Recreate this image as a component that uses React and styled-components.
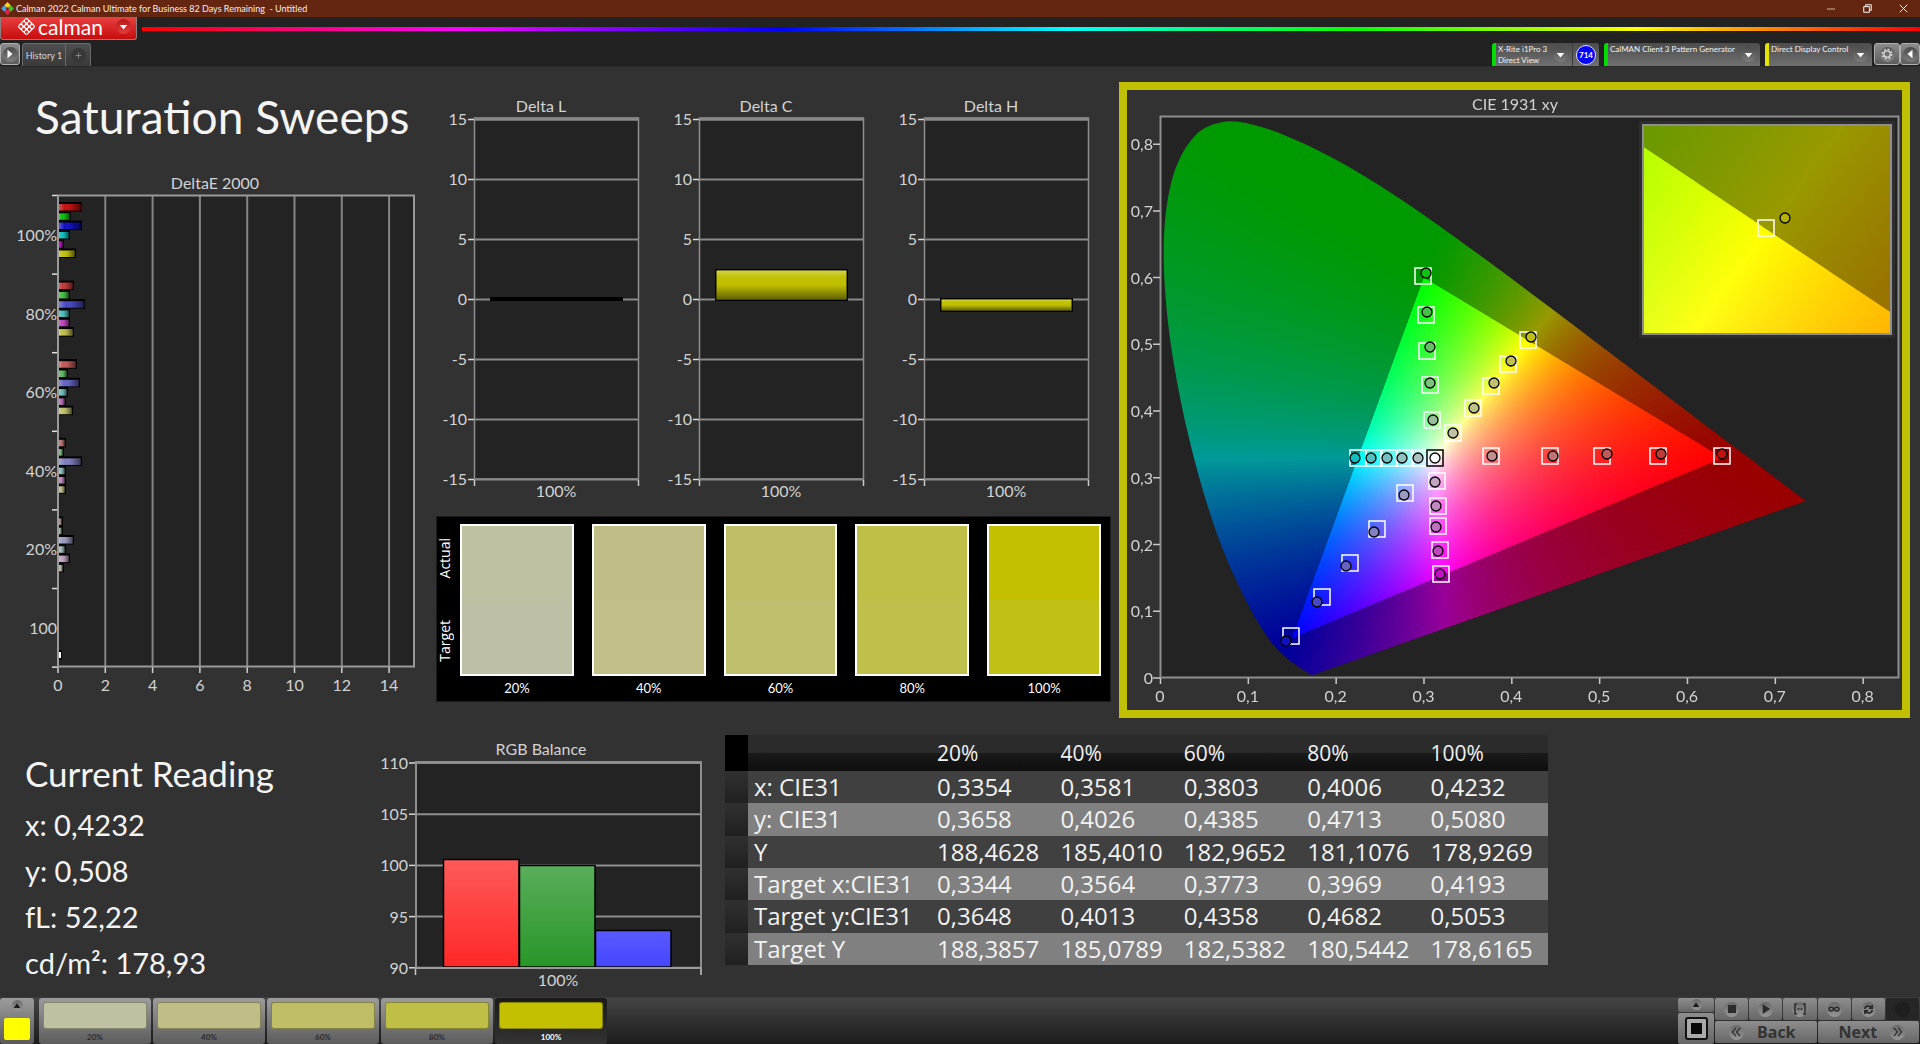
import React, { useEffect, useRef } from "react";
import styled, { createGlobalStyle } from "styled-components";

const UI = `Lato, "Open Sans", sans-serif`;
const SYS = `"Open Sans", "Noto Sans", sans-serif`;

const GlobalStyle = createGlobalStyle`
  * { box-sizing: border-box; }
  body { margin: 0; background: #323232; color: #f0f0f0; font-family: ${UI}; }
  button { font: inherit; color: inherit; border: 0; padding: 0; margin: 0; cursor: pointer; }
`;

/* ---------- shell ---------- */

const Shell = styled.div`
  min-height: 100vh;
  display: flex;
  flex-direction: column;
  background: #323232;
`;

const TitleBar = styled.header`
  height: 17px;
  display: flex;
  align-items: center;
  gap: 2px;
  padding-left: 1px;
  background: #642610;
  color: #f6eeea;
  font: 9px/17px ${UI};
`;

const TitleText = styled.span`
  flex: 1;
  white-space: pre;
`;

const WindowButton = styled.button`
  width: 34px;
  height: 17px;
  display: grid;
  place-items: center;
  background: none;
`;

const Brand = styled.div`
  display: flex;
  align-items: center;
  gap: 5px;
  height: 23px;
  background: #222;
`;

const BrandButton = styled.button`
  width: 137px;
  height: 23px;
  display: flex;
  align-items: center;
  padding: 0 5px 3px 16px;
  border: 1px solid #8b8080;
  border-top: 0;
  border-radius: 0 0 3px 3px;
  background: linear-gradient(#e84040, #c80c0c);
  color: #fff;
`;

const BrandName = styled.span`
  flex: 1;
  padding-left: 2px;
  text-align: left;
  font: 21px/18px ${UI};
`;

const Round = styled.span`
  width: ${(p) => p.$size || 15}px;
  height: ${(p) => p.$size || 15}px;
  flex: none;
  display: grid;
  place-items: center;
  border-radius: 50%;
  background: ${(p) => p.$bg || "linear-gradient(#4c4c4c, #7c7c7c)"};
`;

const Rainbow = styled.div`
  flex: 1;
  height: 4px;
  background: linear-gradient(90deg, #f00, #f0f 18%, #00f 36%, #0ff 52%, #0f0 68%, #ff0 84%, #f00);
`;

const TabRow = styled.nav`
  display: flex;
  align-items: flex-start;
  height: 26px;
  padding-top: 3px;
  background: #222;
`;

const EdgeButton = styled.button`
  width: ${(p) => p.$w}px;
  height: 22px;
  display: grid;
  place-items: center;
  border: 1px solid #b0b0b0;
  border-radius: 3px;
  background: linear-gradient(#8c8c8c, #5c5c5c);
`;

const Tab = styled.button`
  height: 23px;
  width: ${(p) => p.$w}px;
  display: grid;
  place-items: center;
  border: 1px solid #6a6a6a;
  border-bottom: 0;
  border-left-width: ${(p) => (p.$first ? 1 : 0)}px;
  border-radius: ${(p) => (p.$first ? "3px 0 0 0" : "0 3px 0 0")};
  background: linear-gradient(#4e4e4e, #3a3a3a);
  color: #d8d8d8;
  font-size: 9px;
`;

const Tabs = styled.div`
  display: flex;
  flex: 1;
  padding-left: 2px;
`;

const Devices = styled.div`
  display: flex;
  gap: 5px;
  padding-right: 2px;
`;

const Device = styled.div`
  display: flex;
  width: ${(p) => p.$w}px;
  height: 23px;
  border-left: 4px solid ${(p) => p.$color};
  border-radius: 3px 3px 0 0;
  background: linear-gradient(#4c4c4c, #707070);
`;

const DeviceButton = styled.button`
  flex: 1;
  display: flex;
  align-items: flex-start;
  padding: 1px 4px 0 2px;
  background: none;
  color: #f2f2f2;
  text-align: left;
  font-size: 8px;
  line-height: 11px;
  white-space: nowrap;
`;

const DeviceName = styled.span`
  flex: 1;
`;

const DeviceArrow = styled(Round)`
  margin-top: 3px;
`;

const Meter = styled.span`
  width: 27px;
  display: grid;
  place-items: center;
  border-left: 1px solid #3c3c3c;
`;

const MeterCount = styled.span`
  width: 20px;
  height: 20px;
  border: 1px solid #e0e0ff;
  border-radius: 50%;
  background: #00f;
  color: #fff;
  text-align: center;
  font: bold 8px/18px ${UI};
`;

/* ---------- workspace ---------- */

const Workspace = styled.main`
  flex: 1;
  border-top: 1px solid #2a2a2a;
`;

const TopGrid = styled.div`
  display: grid;
  grid-template-columns: minmax(0, 436fr) minmax(0, 683fr) minmax(0, 791fr);
  padding-right: 10px;
`;

const Column = styled.section`
  padding: ${(p) => p.$pad};
`;

const PageTitle = styled.h1`
  margin: 0 0 18px;
  padding: 20px 0 0 35px;
  font: 46px/60px ${UI};
  color: #f4f4f4;
  white-space: nowrap;
`;

const Chart = styled.svg`
  display: block;
  width: 100%;
  overflow: visible;
  font: 16px ${UI};
  fill: #d2d2d2;
`;

const DeltaRow = styled.div`
  display: grid;
  grid-template-columns: repeat(3, 1fr);
  margin-bottom: 6px;
`;

const SwatchPanel = styled.div`
  display: flex;
  gap: 4px;
  height: 186px;
  padding: 7px 9px 8px 0;
  border: 1px solid #1c1c1c;
  background: #000;
  color: #fff;
`;

const SideLabels = styled.div`
  width: 19px;
  height: 152px;
  padding: 14px 0;
  display: flex;
  flex-direction: column;
  justify-content: space-between;
`;

const SideLabel = styled.span`
  padding-left: 1px;
  writing-mode: vertical-rl;
  transform: rotate(180deg);
  font: 14px/16px ${SYS};
`;

const SwatchList = styled.div`
  flex: 1;
  display: grid;
  grid-template-columns: repeat(5, 1fr);
  gap: 18px;
`;

const Swatch = styled.figure`
  margin: 0;
  text-align: center;
`;

const SwatchColor = styled.div`
  height: 152px;
  border: 2px solid #fff;
  background: linear-gradient(${(p) => p.$actual} 50%, ${(p) => p.$target} 50%);
`;

const SwatchLabel = styled.figcaption`
  font-size: 13px;
  line-height: 24px;
`;

const CiePanel = styled.section`
  margin-top: 15px;
  display: grid;
  border: 8px solid #c0c000;
`;

const CieCanvas = styled.canvas`
  grid-area: 1 / 1;
  width: 100%;
  display: block;
`;

const CieOverlay = styled(Chart)`
  grid-area: 1 / 1;
`;

const BottomGrid = styled.div`
  display: grid;
  grid-template-columns: minmax(0, 370fr) minmax(0, 355fr) minmax(0, 823fr) minmax(0, 372fr);
  align-items: start;
  padding-top: 17px;
`;

const Reading = styled.section`
  padding: 12px 0 0 25px;
`;

const ReadingTitle = styled.h2`
  margin: 0 0 3px;
  font: 35px/52px ${UI};
  color: #f4f4f4;
`;

const ReadingLine = styled.p`
  margin: 0;
  font: 29px/46px ${UI};
  color: #f4f4f4;
`;

const DataTable = styled.table`
  width: 100%;
  height: 230px;
  table-layout: fixed;
  border-collapse: collapse;
  font: 24px/32px ${SYS};
  color: #f2f2f2;
`;

const StubCol = styled.col` width: 23px; `;
const NameCol = styled.col` width: 183px; `;

const HeadCell = styled.th`
  height: 36px;
  padding: 0 0 0 6px;
  text-align: left;
  font-weight: 400;
  font-size: 21px;
  background: linear-gradient(#2b2b2b 50%, #1a1a1a 50%, #0e0e0e);
`;

const HeadStub = styled.td`
  background: #000;
`;

const Stub = styled.td`
  background: linear-gradient(#303030, #202020);
`;

const NameCell = styled.th`
  height: 32px;
  padding: 0 0 0 6px;
  text-align: left;
  font-weight: 400;
  white-space: nowrap;
`;

const Cell = styled.td`
  padding: 0 0 0 6px;
`;

const Row = styled.tr`
  background: ${(p) => (p.$light ? "#808080" : "#404040")};
`;

/* ---------- footer ---------- */

const Footer = styled.footer`
  display: flex;
  height: 47px;
  align-items: stretch;
  gap: 2px;
  border-top: 1px solid #3c3c3c;
  background: linear-gradient(#444, #1c1c1c);
`;

const Launcher = styled.button`
  width: 34px;
  margin-right: 3px;
  padding: 2px 4px 4px;
  display: flex;
  flex-direction: column;
  align-items: center;
  justify-content: space-between;
  border-radius: 3px;
  background: linear-gradient(#9c9c9c, #5a5a5a);
`;

const CurrentColor = styled.span`
  width: 26px;
  height: 22px;
  border-radius: 2px;
  background: #ff0;
`;

const LevelButton = styled.button`
  width: 112px;
  padding: 4px 4px 0;
  display: flex;
  flex-direction: column;
  border-radius: 3px;
  background: ${(p) => (p.$active ? "linear-gradient(#1a1a1a, #333)" : "linear-gradient(#9c9c9c, #5c5c5c)")};
  color: ${(p) => (p.$active ? "#fff" : "#2c2c2c")};
  font: bold 8px/12px ${UI};
  text-align: center;
`;

const LevelColor = styled.span`
  height: 27px;
  width: 100%;
  margin-bottom: 2px;
  border: 1px solid rgba(0, 0, 0, 0.3);
  border-radius: 3px;
  background: ${(p) => p.$color};
`;

const LevelText = styled.span`
  width: 100%;
`;

const Spacer = styled.span`
  flex: 1;
`;

const StopStack = styled.div`
  width: 36px;
  display: flex;
  flex-direction: column;
  gap: 1px;
`;

const PadButton = styled.button`
  flex: ${(p) => p.$flex || 1};
  display: flex;
  align-items: center;
  justify-content: center;
  gap: ${(p) => p.$gap || 0}px;
  padding: ${(p) => p.$pad || "0"};
  border-radius: 2px;
  background: ${(p) => (p.$off ? "#262626" : "linear-gradient(#8e8e8e, #666)")};
  color: #333;
  font: bold 16px/20px ${SYS};
`;

const StopFrame = styled.span`
  width: 23px;
  height: 23px;
  display: grid;
  place-items: center;
  border: 2px solid #111;
  border-radius: 3px;
  background: #aaa;
`;

const Transport = styled.div`
  width: 204px;
  margin: 0 1px 0 -1px;
  display: grid;
  grid-template-rows: 22px 22px;
  gap: 1px;
`;

const TransportRow = styled.div`
  display: flex;
  gap: 1px;
`;

/* ---------- data ---------- */

const LEVELS = [
  { label: "20%", actual: "#c0c0a2", target: "#bfbfa5" },
  { label: "40%", actual: "#c0be86", target: "#c0c088" },
  { label: "60%", actual: "#bfbd66", target: "#bfbf6e" },
  { label: "80%", actual: "#bfbf48", target: "#bfc04c" },
  { label: "100%", actual: "#c2c000", target: "#c1c015" },
];

const SERIES = {
  100: ["#c01010", "#10c010", "#1010c0", "#10c0c0", "#c010c0", "#c0c010"],
  80: ["#c03a3a", "#48c048", "#4848c0", "#50c0c0", "#c048c0", "#c0c050"],
  60: ["#c05a5a", "#64c064", "#6464c0", "#74c0c0", "#c070c0", "#c0c070"],
  40: ["#c07474", "#7cc07c", "#8080c0", "#90c0c0", "#c08ac0", "#c0c08a"],
  20: ["#c09090", "#98c098", "#9c9cc0", "#a8c0c0", "#c0a4c0", "#c0c0a4"],
};

const DELTA_E = [
  { label: "100%", key: 100, bars: [24, 13, 24, 12, 6, 18] },
  { label: "80%", key: 80, bars: [16, 12, 27, 12, 12, 16] },
  { label: "60%", key: 60, bars: [19, 10, 22, 10, 8, 15] },
  { label: "40%", key: 40, bars: [8, 6, 24, 8, 8, 8] },
  { label: "20%", key: 20, bars: [5, 5, 16, 8, 12, 6] },
  { label: "100", key: null, bars: [] },
];

const TABLE = [
  ["x: CIE31", "0,3354", "0,3581", "0,3803", "0,4006", "0,4232"],
  ["y: CIE31", "0,3658", "0,4026", "0,4385", "0,4713", "0,5080"],
  ["Y", "188,4628", "185,4010", "182,9652", "181,1076", "178,9269"],
  ["Target x:CIE31", "0,3344", "0,3564", "0,3773", "0,3969", "0,4193"],
  ["Target y:CIE31", "0,3648", "0,4013", "0,4358", "0,4682", "0,5053"],
  ["Target Y", "188,3857", "185,0789", "182,5382", "180,5442", "178,6165"],
];

/* target x, target y, measured x, measured y, per hue from 100% down to 20% */
const POINTS = [
  [[1722, 456, 1722, 454], [1658, 456, 1661, 454], [1602, 456, 1607, 454], [1550, 456, 1553, 456], [1491, 456, 1492, 456]],
  [[1423, 276, 1426, 273], [1426, 315, 1427, 312], [1427, 351, 1430, 347], [1430, 385, 1430, 383], [1432, 420, 1433, 420]],
  [[1291, 636, 1286, 641], [1322, 597, 1317, 602], [1350, 563, 1346, 566], [1377, 529, 1374, 532], [1405, 493, 1404, 495]],
  [[1358, 458, 1355, 458], [1374, 458, 1371, 458], [1389, 458, 1387, 458], [1405, 458, 1402, 458], [1420, 458, 1418, 458]],
  [[1441, 574, 1440, 574], [1440, 550, 1438, 551], [1438, 526, 1436, 527], [1438, 506, 1436, 506], [1437, 481, 1435, 482]],
  [[1528, 340, 1531, 337], [1508, 364, 1511, 361], [1491, 386, 1494, 383], [1473, 408, 1474, 408], [1453, 433, 1453, 433]],
];

const LOCUS = [
  [0.1741, 0.005], [0.1714, 0.0051], [0.1689, 0.0069], [0.1644, 0.0109], [0.1566, 0.0177], [0.151, 0.0227],
  [0.144, 0.0297], [0.1355, 0.0399], [0.1241, 0.0578], [0.1096, 0.0868], [0.0913, 0.1327], [0.0687, 0.2007],
  [0.0454, 0.295], [0.0235, 0.4127], [0.0082, 0.5384], [0.0039, 0.6548], [0.0139, 0.7502], [0.0389, 0.812],
  [0.0743, 0.8338], [0.1142, 0.8262], [0.1547, 0.8059], [0.1929, 0.7816], [0.2296, 0.7543], [0.2658, 0.7243],
  [0.3016, 0.6923], [0.3731, 0.6245], [0.4441, 0.5547], [0.5125, 0.4866], [0.5752, 0.4242], [0.627, 0.3725],
  [0.6658, 0.334], [0.6915, 0.3083], [0.719, 0.2809], [0.7347, 0.2653],
];

/* ---------- chromaticity diagram ---------- */

const VIEW = { x: 1127, y: 90, w: 775, h: 620 };
const PLOT = { x: 1160.4, y: 678, sx: 878.3, sy: 667.3 };
const INSET = { x: 1643, y: 125, w: 248, h: 209, cx: 0.4193, cy: 0.5053, span: 0.05 };

function xyToRgb(x, y) {
  const X = x / y;
  const Z = (1 - x - y) / y;
  const r = 3.2406 * X - 1.5372 - 0.4986 * Z;
  const g = -0.9689 * X + 1.8758 + 0.0415 * Z;
  const b = 0.0557 * X - 0.204 + 1.057 * Z;
  const inside = r >= 0 && g >= 0 && b >= 0;
  const k = (inside ? 255 : 153) / Math.max(r, g, b);
  return [Math.max(0, r) * k, Math.max(0, g) * k, Math.max(0, b) * k];
}

function shade(width, height, toXY) {
  const s = 2;
  const canvas = document.createElement("canvas");
  canvas.width = width * s;
  canvas.height = height * s;
  const ctx = canvas.getContext("2d");
  const image = ctx.createImageData(canvas.width, canvas.height);
  for (let j = 0, i = 0; j < canvas.height; j++) {
    for (let k = 0; k < canvas.width; k++, i += 4) {
      const [x, y] = toXY((k + 0.5) / s, (j + 0.5) / s);
      const [r, g, b] = xyToRgb(x, Math.max(y, 0.0001));
      image.data[i] = r;
      image.data[i + 1] = g;
      image.data[i + 2] = b;
      image.data[i + 3] = 255;
    }
  }
  ctx.putImageData(image, 0, 0);
  return canvas;
}

function traceLocus(ctx) {
  const pts = LOCUS.map(([x, y]) => [PLOT.x + x * PLOT.sx - VIEW.x, PLOT.y - y * PLOT.sy - VIEW.y]);
  const n = pts.length;
  ctx.beginPath();
  ctx.moveTo(...pts[0]);
  for (let i = 0; i < n - 1; i++) {
    const a = pts[Math.max(i - 1, 0)];
    const b = pts[i];
    const c = pts[i + 1];
    const d = pts[Math.min(i + 2, n - 1)];
    ctx.bezierCurveTo(
      b[0] + (c[0] - a[0]) / 6, b[1] + (c[1] - a[1]) / 6,
      c[0] - (d[0] - b[0]) / 6, c[1] - (d[1] - b[1]) / 6,
      c[0], c[1]
    );
  }
  ctx.closePath();
}

function paintCie(canvas) {
  const ctx = canvas.getContext("2d");
  ctx.clearRect(0, 0, VIEW.w, VIEW.h);
  ctx.fillStyle = "#232323";
  ctx.fillRect(1160 - VIEW.x, 116 - VIEW.y, 739, 562);
  const body = shade(VIEW.w, VIEW.h, (px, py) => [
    (px + VIEW.x - PLOT.x) / PLOT.sx,
    (PLOT.y - py - VIEW.y) / PLOT.sy,
  ]);
  ctx.save();
  traceLocus(ctx);
  ctx.clip();
  ctx.drawImage(body, 0, 0, VIEW.w, VIEW.h);
  ctx.restore();
  ctx.fillStyle = "#2e2e2e";
  ctx.fillRect(1639 - VIEW.x, 121 - VIEW.y, 256, 217);
  const zoomed = shade(INSET.w, INSET.h, (px, py) => [
    INSET.cx + (px / INSET.w - 0.5) * INSET.span,
    INSET.cy - (py / INSET.h - 0.5) * INSET.span,
  ]);
  ctx.drawImage(zoomed, INSET.x - VIEW.x, INSET.y - VIEW.y, INSET.w, INSET.h);
}

function Marker({ x, y, color, stroke = "#fff", cx, cy }) {
  return (
    <g>
      <rect x={x - 8} y={y - 8} width="16" height="16" fill="none" stroke={stroke} strokeWidth="1.5" />
      <circle cx={cx} cy={cy} r="5" fill={color} stroke="#000" strokeWidth="1.3" />
    </g>
  );
}

function CieChart() {
  const ref = useRef(null);
  useEffect(() => paintCie(ref.current), []);
  const ticks = [0, 1, 2, 3, 4, 5, 6, 7, 8];
  const keys = [100, 80, 60, 40, 20];
  const name = (t) => (t ? `0,${t}` : "0");
  return (
    <CiePanel aria-label="CIE 1931 xy">
      <CieCanvas ref={ref} width={VIEW.w} height={VIEW.h} />
      <CieOverlay viewBox={`${VIEW.x} ${VIEW.y} ${VIEW.w} ${VIEW.h}`}>
        <text x="1515" y="110" textAnchor="middle">CIE 1931 xy</text>
        <rect x="1160.5" y="116.5" width="738" height="561" fill="none" stroke="#8e8e8e" strokeWidth="2" />
        {ticks.map((t) => (
          <g key={t}>
            <path d={`M${1160.5 + t * 87.83} 678v6M1153 ${678 - t * 66.73}h7`} stroke="#c8c8c8" strokeWidth="1.5" />
            <text x={1160 + t * 87.83} y="702" textAnchor="middle">{name(t)}</text>
            <text x="1153" y={684 - t * 66.73} textAnchor="end">{name(t)}</text>
          </g>
        ))}
        {POINTS.map((hue, h) =>
          hue.map(([x, y, cx, cy], i) => (
            <Marker key={`${h}-${i}`} x={x} y={y} cx={cx} cy={cy} color={SERIES[keys[i]][h]} />
          ))
        )}
        <Marker x={1435} y={458} cx={1435} cy={458} color="#fff" stroke="#000" />
        <rect x="1643" y="125" width="248" height="209" fill="none" stroke="#8e8e8e" strokeWidth="2" />
        <Marker x={1766} y={228} cx={1785} cy={218} color="#b4b400" />
      </CieOverlay>
    </CiePanel>
  );
}

/* ---------- bar charts ---------- */

function DeltaEChart() {
  const step = 78.6;
  return (
    <Chart viewBox="0 165 436 540">
      <defs>
        <linearGradient id="shadeX">
          <stop offset="0" stopColor="#fff" stopOpacity=".35" />
          <stop offset=".3" stopColor="#fff" stopOpacity="0" />
          <stop offset=".6" stopColor="#000" stopOpacity=".1" />
          <stop offset="1" stopColor="#000" stopOpacity=".55" />
        </linearGradient>
      </defs>
      <text x="215" y="189" textAnchor="middle">DeltaE 2000</text>
      <rect x="58" y="195.5" width="356" height="471" fill="#232323" />
      {[0, 2, 4, 6, 8, 10, 12, 14].map((v) => (
        <g key={v}>
          <path d={`M${58 + v * 23.65} 196v470`} stroke="#858585" strokeWidth="2" />
          <path d={`M${58 + v * 23.65} 667v6`} stroke="#d0d0d0" strokeWidth="1.5" />
          <text x={58 + v * 23.65} y="691" textAnchor="middle">{v}</text>
        </g>
      ))}
      {[0, 1, 2, 3, 4, 5, 6].map((i) => (
        <path key={i} d={`M52 ${195.5 + i * step}h6`} stroke="#e0e0e0" strokeWidth="1.5" />
      ))}
      {DELTA_E.map((group, g) => (
        <g key={group.label}>
          <text x="57" y={241 + g * step} textAnchor="end">{group.label}</text>
          {group.bars.map((w, i) => {
            const y = 203 + g * step + i * 9.3;
            return (
              <g key={i}>
                <rect x="58" y={y - 1} width={w} height="9.5" fill="#000" />
                <rect x="58" y={y + 1} width={w - 1.5} height="6.5" fill={SERIES[group.key][i]} />
                <rect x="58" y={y + 1} width={w - 1.5} height="6.5" fill="url(#shadeX)" />
              </g>
            );
          })}
        </g>
      ))}
      <rect x="58" y="650" width="4" height="10" fill="#000" />
      <rect x="58" y="652" width="3" height="6" fill="#fff" />
      <rect x="58" y="195.5" width="356" height="471" fill="none" stroke="#9a9a9a" strokeWidth="2" />
    </Chart>
  );
}

function DeltaChart({ title, top, height, color }) {
  return (
    <Chart viewBox="0 90 225 420">
      <defs>
        <linearGradient id="shadeY" x2="0" y2="1">
          <stop offset="0" stopColor="#fff" stopOpacity=".3" />
          <stop offset=".25" stopColor="#fff" stopOpacity="0" />
          <stop offset=".5" stopColor="#000" stopOpacity="0" />
          <stop offset="1" stopColor="#000" stopOpacity=".5" />
        </linearGradient>
      </defs>
      <text x="105" y="112" textAnchor="middle">{title}</text>
      <rect x="38.5" y="118" width="164" height="361" fill="#232323" stroke="#8e8e8e" strokeWidth="1.5" />
      <path d="M38.5 119h164" stroke="#828282" strokeWidth="3" />
      {[15, 10, 5, 0, -5, -10, -15].map((v) => (
        <g key={v}>
          <path d={`M38 ${299.5 - v * 12}h165`} stroke="#8a8a8a" strokeWidth="2" />
          <path d={`M32 ${299.5 - v * 12}h6`} stroke="#d8d8d8" strokeWidth="1.5" />
          <text x="31" y={305 - v * 12} textAnchor="end">{v}</text>
        </g>
      ))}
      <path d="M38.5 480v6M202.5 480v6" stroke="#c8c8c8" strokeWidth="1.5" />
      <rect x="54" y={top} width="133" height={height} fill="#000" />
      {color && (
        <>
          <rect x="55.5" y={top + 1.5} width="130" height={height - 3} fill={color} />
          <rect x="55.5" y={top + 1.5} width="130" height={height - 3} fill="url(#shadeY)" />
        </>
      )}
      <text x="120" y="497" textAnchor="middle">100%</text>
    </Chart>
  );
}

function RgbChart() {
  const bars = [
    ["r", 73.5, 859.5, "#ff5a5a", "#ff2828"],
    ["g", 149.5, 865.5, "#5aae5a", "#289628"],
    ["b", 225.5, 930.5, "#5a5aff", "#4646ff"],
  ];
  return (
    <Chart viewBox="0 735 355 260">
      <text x="171" y="755" textAnchor="middle">RGB Balance</text>
      <rect x="46" y="762" width="285" height="206" fill="#232323" stroke="#8e8e8e" strokeWidth="2" />
      {[110, 105, 100, 95, 90].map((v, i) => (
        <g key={v}>
          <path d={`M46 ${763 + i * 51.2}h285`} stroke="#8e8e8e" strokeWidth="2" />
          <path d={`M39 ${763 + i * 51.2}h6`} stroke="#d8d8d8" strokeWidth="1.5" />
          <text x="38" y={769 + i * 51.2} textAnchor="end">{v}</text>
        </g>
      ))}
      {bars.map(([id, x, y, from, to]) => (
        <g key={id}>
          <linearGradient id={`bar-${id}`} x2="0" y2="1">
            <stop stopColor={from} />
            <stop offset="1" stopColor={to} />
          </linearGradient>
          <rect x={x} y={y} width="75.5" height={967 - y} fill={`url(#bar-${id})`} stroke="#000" strokeWidth="1.5" />
        </g>
      ))}
      <path d="M45 968h287" stroke="#9a9a9a" strokeWidth="2" />
      <path d="M45.5 969v6M331 969v6" stroke="#c8c8c8" strokeWidth="1.5" />
      <text x="188" y="986" textAnchor="middle">100%</text>
    </Chart>
  );
}

/* ---------- icons ---------- */

const Icon = ({ size = 12, children, ...rest }) => (
  <svg width={size} height={size} viewBox="0 0 12 12" aria-hidden="true" {...rest}>{children}</svg>
);
const Down = ({ color = "#fff" }) => <Icon size={9}><path d="M1 4h10L6 10z" fill={color} /></Icon>;
const Up = () => <Icon size={8}><path d="M1 9h10L6 2z" fill="#1c1c1c" /></Icon>;
const RightTri = () => <Icon size={10}><path d="M3 1v10l6-5z" fill="#fff" /></Icon>;
const LeftTri = () => <Icon size={10}><path d="M9 1v10L3 6z" fill="#fff" /></Icon>;

function AppIcon() {
  return (
    <Icon size={13}>
      <path d="M6 0l3 3-3 3-3-3z" fill="#ffd21e" />
      <path d="M3 3l3 3-3 3-3-3z" fill="#3aa8e8" />
      <path d="M9 3l3 3-3 3-3-3z" fill="#38c828" />
      <path d="M6 6l3 3-3 3-3-3z" fill="#ee1c4c" />
      <path d="M6 4.500L7.500 6 6 7.500 4.500 6z" fill="#642610" />
    </Icon>
  );
}

function CalmanMark() {
  const dots = [-1, 0, 1].flatMap((a) => [-1, 0, 1].map((b) => [a, b]));
  return (
    <svg width="19" height="19" viewBox="0 0 19 19" aria-hidden="true">
      <g transform="rotate(45 9.5 9.5)">
        <rect x="3" y="3" width="13" height="13" rx="2" fill="#fff" />
        {dots.map(([a, b]) => (
          <circle key={`${a}${b}`} cx={9.5 + a * 4} cy={9.5 + b * 4} r="1.500" fill="#dc2c2c" />
        ))}
      </g>
    </svg>
  );
}

const Stroke = ({ d, size = 12, w = 1.5 }) => (
  <Icon size={size}><path d={d} fill="none" stroke="#2c2c2c" strokeWidth={w} /></Icon>
);

const padRound = "linear-gradient(#6a6a6a, #969696)";

export default function App() {
  return (
    <Shell>
      <GlobalStyle />
      <TitleBar>
        <AppIcon />
        <TitleText>{"Calman 2022 Calman Ultimate for Business 82 Days Remaining  - Untitled"}</TitleText>
        <WindowButton aria-label="Minimize"><Icon size={8}><path d="M0 6h12" stroke="#fff" /></Icon></WindowButton>
        <WindowButton aria-label="Restore">
          <Icon size={9}><path d="M1 3.500h7.500v7.500H1zM3.500 3V1h7.500v7.500H9" fill="none" stroke="#fff" strokeWidth="1.300" /></Icon>
        </WindowButton>
        <WindowButton aria-label="Close"><Icon size={9}><path d="M1 1l10 10M11 1L1 11" stroke="#fff" strokeWidth="1.300" /></Icon></WindowButton>
      </TitleBar>

      <Brand>
        <BrandButton aria-label="calman menu">
          <CalmanMark />
          <BrandName>calman</BrandName>
          <Round $bg="linear-gradient(#b41a1a, #e43c3c)"><Down /></Round>
        </BrandButton>
        <Rainbow />
      </Brand>

      <TabRow>
        <EdgeButton $w={20} aria-label="Expand"><Round $bg="linear-gradient(#4a4a4a, #808080)"><RightTri /></Round></EdgeButton>
        <Tabs>
          <Tab $w={44} $first>History 1</Tab>
          <Tab $w={25} aria-label="Add tab">
            <Round $bg="#383838"><Icon size={7}><path d="M6 1v10M1 6h10" stroke="#8c8c8c" strokeWidth="1.500" /></Icon></Round>
          </Tab>
        </Tabs>
        <Devices>
          <Device $w={107} $color="#0d0">
            <DeviceButton><DeviceName>X-Rite i1Pro 3<br />Direct View</DeviceName><DeviceArrow><Down /></DeviceArrow></DeviceButton>
            <Meter><MeterCount>714</MeterCount></Meter>
          </Device>
          <Device $w={156} $color="#0d0">
            <DeviceButton><DeviceName>CalMAN Client 3 Pattern Generator</DeviceName><DeviceArrow><Down /></DeviceArrow></DeviceButton>
          </Device>
          <Device $w={107} $color="#e4e400">
            <DeviceButton><DeviceName>Direct Display Control</DeviceName><DeviceArrow><Down /></DeviceArrow></DeviceButton>
          </Device>
        </Devices>
        <EdgeButton $w={26} aria-label="Settings">
          <Round $bg="linear-gradient(#5a5a5a, #868686)">
            <Icon size={12}>
              <circle cx="6" cy="6" r="3.200" fill="none" stroke="#ddd" strokeWidth="1.300" />
              <circle cx="6" cy="6" r="4.800" fill="none" stroke="#ddd" strokeWidth="1.400" strokeDasharray="1.900 1.870" />
            </Icon>
          </Round>
        </EdgeButton>
        <EdgeButton $w={20} aria-label="Collapse"><Round><LeftTri /></Round></EdgeButton>
      </TabRow>

      <Workspace>
        <TopGrid>
          <Column $pad="0">
            <PageTitle>Saturation Sweeps</PageTitle>
            <DeltaEChart />
          </Column>
          <Column $pad="23px 8px 0 0">
            <DeltaRow>
              <DeltaChart title="Delta L" top={297} height={4} />
              <DeltaChart title="Delta C" top={269} height={32} color="#c0c000" />
              <DeltaChart title="Delta H" top={298} height={14} color="#c0c000" />
            </DeltaRow>
            <SwatchPanel>
              <SideLabels>
                <SideLabel>Actual</SideLabel>
                <SideLabel>Target</SideLabel>
              </SideLabels>
              <SwatchList>
                {LEVELS.map((l) => (
                  <Swatch key={l.label}>
                    <SwatchColor $actual={l.actual} $target={l.target} />
                    <SwatchLabel>{l.label}</SwatchLabel>
                  </Swatch>
                ))}
              </SwatchList>
            </SwatchPanel>
          </Column>
          <CieChart />
        </TopGrid>

        <BottomGrid>
          <Reading>
            <ReadingTitle>Current Reading</ReadingTitle>
            <ReadingLine>x: 0,4232</ReadingLine>
            <ReadingLine>y: 0,508</ReadingLine>
            <ReadingLine>fL: 52,22</ReadingLine>
            <ReadingLine>cd/m²: 178,93</ReadingLine>
          </Reading>
          <RgbChart />
          <DataTable>
            <colgroup>
              <StubCol /><NameCol /><col /><col /><col /><col /><col />
            </colgroup>
            <thead>
              <tr>
                <HeadStub />
                <HeadCell />
                {LEVELS.map((l) => <HeadCell key={l.label} scope="col">{l.label}</HeadCell>)}
              </tr>
            </thead>
            <tbody>
              {TABLE.map(([name, ...cells], i) => (
                <Row key={name} $light={i % 2 === 1}>
                  <Stub />
                  <NameCell scope="row">{name}</NameCell>
                  {cells.map((c) => <Cell key={c}>{c}</Cell>)}
                </Row>
              ))}
            </tbody>
          </DataTable>
        </BottomGrid>
      </Workspace>

      <Footer>
        <Launcher aria-label="Current pattern">
          <Round $size={11} $bg={padRound}><Up /></Round>
          <CurrentColor />
        </Launcher>
        {LEVELS.map((l) => (
          <LevelButton key={l.label} $active={l.label === "100%"}>
            <LevelColor $color={l.actual} />
            <LevelText>{l.label}</LevelText>
          </LevelButton>
        ))}
        <Spacer />
        <StopStack>
          <PadButton $flex={3} aria-label="Expand controls"><Round $size={11} $bg={padRound}><Up /></Round></PadButton>
          <PadButton $flex={7} aria-label="Stop pattern"><StopFrame><Icon size={11}><path d="M0 0h12v12H0z" fill="#0a0a0a" /></Icon></StopFrame></PadButton>
        </StopStack>
        <Transport>
          <TransportRow>
            <PadButton aria-label="Stop"><Round $bg={padRound}><Icon size={8}><path d="M0 0h12v12H0z" fill="#2c2c2c" /></Icon></Round></PadButton>
            <PadButton aria-label="Play"><Round $bg={padRound}><Icon size={10}><path d="M2 0v12l9-6z" fill="#2c2c2c" /></Icon></Round></PadButton>
            <PadButton aria-label="Series"><Round $bg={padRound}><Stroke d="M3 1H1v10h2M9 1h2v10H9M3.500 6h2M6.500 6h2" /></Round></PadButton>
            <PadButton aria-label="Continuous"><Round $bg={padRound}><Stroke d="M6 6C4.500 3.500 1 3.500 1 6s3.500 2.500 5 0 5-2.500 5 0-3.500 2.500-5 0z" /></Round></PadButton>
            <PadButton aria-label="Refresh"><Round $bg={padRound}><Stroke size={11} w={1.8} d="M2 5.500C2 2 7 1 9.500 4M10 1v3.500H6.500M10 6.500C10 10 5 11 2.500 8M2 11V7.500h3.500" /></Round></PadButton>
            <PadButton $off aria-label="Inactive"><Round $bg="#1e1e1e" /></PadButton>
          </TransportRow>
          <TransportRow>
            <PadButton $gap={13} $pad="0 7px 0 0"><Round $bg={padRound}><Stroke size={10} d="M6 1L1.500 6 6 11M11 1L6.500 6 11 11" /></Round>Back</PadButton>
            <PadButton $gap={13} $pad="0 0 0 7px">Next<Round $bg={padRound}><Stroke size={10} d="M1 1l4.500 5L1 11M6 1l4.500 5L6 11" /></Round></PadButton>
          </TransportRow>
        </Transport>
      </Footer>
    </Shell>
  );
}
